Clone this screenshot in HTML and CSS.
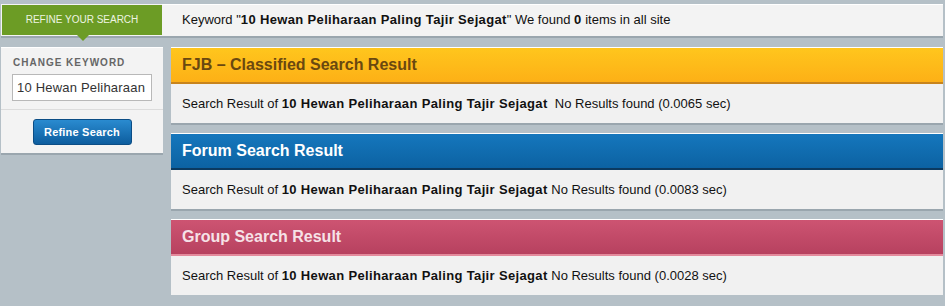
FILE: index.html
```html
<!DOCTYPE html>
<html lang="en">
<head>
  <meta charset="UTF-8" />
  <title>Search Result</title>
  <link rel="stylesheet" href="styles.css">
</head>
<body>
  <div class="page">
    <div class="topbar">
      <div class="refine-tab">REFINE YOUR SEARCH</div>
      <div class="summary">Keyword "<b>10 Hewan Peliharaan Paling Tajir Sejagat</b>" We found <b>0</b> items in all site</div>
    </div>

    <div class="main">
      <div class="sidebar">
        <div class="side-title">CHANGE KEYWORD</div>
        <input type="text" class="keyword" value="10 Hewan Peliharaan Paling Tajir Sejagat" />
        <div class="side-foot">
          <button class="btn-refine">Refine Search</button>
        </div>
      </div>

      <div class="results">
        <div class="result fjb">
          <div class="result-head">FJB – Classified Search Result</div>
          <div class="result-body">Search Result of <b>10 Hewan Peliharaan Paling Tajir Sejagat</b>&nbsp; No Results found (0.0065 sec)</div>
        </div>
        <div class="result forum">
          <div class="result-head">Forum Search Result</div>
          <div class="result-body">Search Result of <b>10 Hewan Peliharaan Paling Tajir Sejagat</b> No Results found (0.0083 sec)</div>
        </div>
        <div class="result group">
          <div class="result-head">Group Search Result</div>
          <div class="result-body">Search Result of <b>10 Hewan Peliharaan Paling Tajir Sejagat</b> No Results found (0.0028 sec)</div>
        </div>
      </div>
    </div>
  </div>
</body>
</html>
```

FILE: styles.css
```css
body {
  margin: 0;
  background: #b5c0c7;
  font-family: Arial, "Liberation Sans", sans-serif;
  font-size: 13px;
  color: #111;
}

b {
  letter-spacing: 0.35px;
}

.page {
  padding: 4px 2px 0 1px;
}

.topbar {
  display: flex;
  height: 32px;
  box-shadow: 0 2px 0 #9aa6ae;
}

.refine-tab {
  position: relative;
  width: 161px;
  box-sizing: border-box;
  background: #6c9c25;
  border: 1px solid #f4f4f4;
  border-right: none;
  color: #eef4e2;
  font-size: 10px;
  line-height: 30px;
  text-align: center;
}

.refine-tab::after {
  content: "";
  position: absolute;
  left: 75px;
  bottom: -6px;
  border-left: 6px solid transparent;
  border-right: 6px solid transparent;
  border-top: 6px solid #6c9c25;
}

.summary {
  flex: 1;
  background: #f3f3f3;
  border-top: 1px solid #fff;
  line-height: 30px;
  padding-left: 20px;
}

.main {
  display: flex;
  gap: 8px;
  margin-top: 11px;
  align-items: flex-start;
}

.sidebar {
  width: 162px;
  background: #f3f3f3;
  border-top: 1px solid #fff;
  box-shadow: 0 2px 0 #9aa6ae;
  box-sizing: border-box;
  padding-top: 9px;
}

.side-title {
  padding-left: 12px;
  font-size: 10px;
  font-weight: bold;
  letter-spacing: 1px;
  color: #666;
}

.keyword {
  display: block;
  margin: 6px 0 0 11px;
  width: 140px;
  height: 27px;
  box-sizing: border-box;
  border: 1px solid #b8b8b8;
  background: #fff;
  padding: 0 4px;
  font-family: Arial, "Liberation Sans", sans-serif;
  font-size: 13px;
  letter-spacing: 0.2px;
  color: #333;
}

.side-foot {
  margin-top: 8px;
  border-top: 1px solid #dcdcdc;
  display: flex;
  justify-content: center;
  padding: 9px 0 8px;
}

.btn-refine {
  width: 99px;
  height: 26px;
  border: 1px solid #0b4d85;
  border-radius: 3px;
  background: linear-gradient(#2a8bd0, #0d5d9e);
  color: #fff;
  font-family: Arial, "Liberation Sans", sans-serif;
  font-size: 11px;
  font-weight: bold;
  letter-spacing: 0.2px;
  cursor: pointer;
}

.results {
  flex: 1;
  display: flex;
  flex-direction: column;
  gap: 10px;
}

.result {
  box-shadow: 0 2px 0 #9aa6ae;
}

.result-head {
  height: 34px;
  line-height: 34px;
  border-top: 1px solid #fff;
  border-bottom: 2px solid;
  padding-left: 11px;
  font-size: 16px;
  font-weight: bold;
}

.result-head {
  letter-spacing: 0;
}

.result-body {
  height: 39px;
  line-height: 39px;
  background: #f1f1f1;
  padding-left: 11px;
  white-space: nowrap;
}

.fjb .result-head {
  background: linear-gradient(#ffc61d, #fdb016);
  border-bottom-color: #c8841c;
  color: #6a4810;
}

.forum .result-head {
  background: linear-gradient(#1577bd, #0c62a2);
  border-bottom-color: #0b3a60;
  color: #fff;
}

.group .result-head {
  background: linear-gradient(#cd5472, #b7415f);
  border-bottom-color: #e48a9c;
  color: #f6e2e7;
}
```
